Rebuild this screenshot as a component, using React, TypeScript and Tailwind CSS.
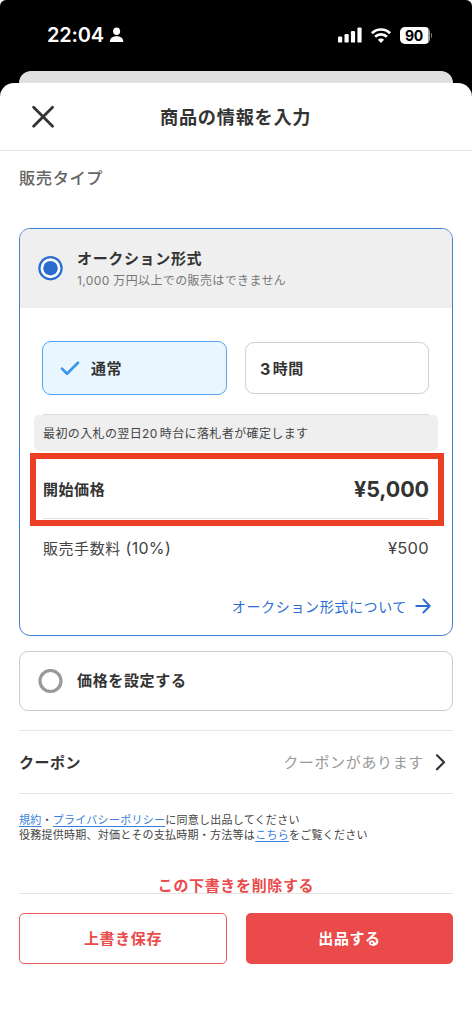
import type { ReactNode } from "react";

function StatusBar() {
  return (
    <div className="flex h-[71px] items-start justify-between pl-[47px] pr-[40px] text-white">
      <div className="flex h-[70px] items-center gap-[5px]">
        <span className="text-[20px] font-semibold leading-none tracking-[-0.2px]">22:04</span>
        <svg width="15" height="16" viewBox="0 0 15 16" fill="currentColor">
          <ellipse cx="7.6" cy="4.2" rx="3.5" ry="3.8" />
          <path d="M0.9 14.4C0.9 11.2 4 9.3 7.6 9.3s6.7 1.9 6.7 5.1c0 .3-.2.5-.5.5H1.4c-.3 0-.5-.2-.5-.5z" />
        </svg>
      </div>
      <div className="flex h-[70px] items-center">
        <svg width="24" height="16" viewBox="0 0 24 16" fill="currentColor">
          <rect x="0" y="9.5" width="4.2" height="6.1" rx="1.2" />
          <rect x="6.5" y="7" width="4.2" height="8.6" rx="1.2" />
          <rect x="12.9" y="4" width="4.2" height="11.6" rx="1.2" />
          <rect x="19.4" y="0.4" width="4.2" height="15.2" rx="1.2" />
        </svg>
        <svg className="ml-[9px]" width="20" height="15" viewBox="0 0 20 15" fill="none" stroke="currentColor" strokeWidth="2.6">
          <path d="M0.9 5.2a13 13 0 0 1 18.2 0" />
          <path d="M4.1 8.8a8.4 8.4 0 0 1 11.8 0" />
          <path d="M10 14.9L6.9 11.8a4.4 4.4 0 0 1 6.2 0z" fill="currentColor" stroke="none" />
        </svg>
        <div className="ml-[9px] flex h-[17px] w-[30px] items-center justify-center rounded-[5px] bg-[linear-gradient(to_right,#fff_92%,#999_92%)] pr-px pt-px text-[14px] font-bold leading-none tracking-[-0.2px] text-black">
          90
        </div>
        <div className="ml-px h-[5px] w-[1.5px] rounded-r-full bg-[#777]" />
      </div>
    </div>
  );
}

function Radio({ checked = false }: { checked?: boolean }) {
  return checked ? (
    <svg width="25" height="25" viewBox="0 0 25 25">
      <circle cx="12.5" cy="12.2" r="11.1" fill="#fff" stroke="#2b6dcf" strokeWidth="2.2" />
      <circle cx="12.5" cy="12.2" r="7.3" fill="#2b6dcf" />
    </svg>
  ) : (
    <svg width="25" height="25" viewBox="0 0 25 25">
      <circle cx="12.5" cy="12" r="10.5" fill="#fff" stroke="#999" strokeWidth="3.2" />
    </svg>
  );
}

function Link({ children }: { children: ReactNode }) {
  return <span className="text-[#3a7fd9] underline decoration-1 underline-offset-[2px]">{children}</span>;
}

export default function App() {
  return (
    <div className="h-[1024px] w-[472px] overflow-hidden bg-white font-['Inter','Noto_Sans_CJK_JP',sans-serif] text-[15px] text-[#333]">
      <div className="rounded-t-[6px] bg-black">
        <StatusBar />
        <div className="mx-[19px] h-[12px] rounded-t-[12px] bg-[#e0e0e0]" />
        <div className="flex h-[68px] items-center rounded-t-[14px] border-b border-[#e6e6e6] bg-white">
          <svg className="ml-[31px]" width="24" height="24" viewBox="0 0 24 24" fill="none" stroke="#333" strokeWidth="2.8" strokeLinecap="round">
            <path d="M2.6 2.3l19 19M21.6 2.3l-19 19" />
          </svg>
          <h1 className="ml-[105px] pt-[2px] text-[18.2px] font-bold leading-none tracking-[0.72px]">商品の情報を入力</h1>
        </div>
      </div>

      <div className="px-[19px]">
        <h2 className="flex h-[77px] items-start pt-[14px] text-[16.3px] font-medium leading-[26px] tracking-[0.55px] text-[#666]">
          販売タイプ
        </h2>

        <section className="h-[408px] overflow-hidden rounded-[11px] border border-[#4482d6]">
          <div className="flex h-[79px] items-center bg-[#efefef] pl-[18px]">
            <Radio checked />
            <div className="ml-[14px] pt-[2px]">
              <div className="text-[15px] font-bold leading-[22px] tracking-[0.65px]">オークション形式</div>
              <div className="text-[12px] leading-[22px] tracking-[0.37px] text-[#777]">1,000 万円以上での販売はできません</div>
            </div>
          </div>

          <div className="flex gap-[18px] pl-[22px] pt-[33px]">
            <div className="flex h-[54px] w-[185px] items-center rounded-[9px] border border-[#55a4ee] bg-[#e9f6ff] pl-[17px]">
              <svg width="20" height="16" viewBox="0 0 20 16" fill="none" stroke="#3b95ed" strokeWidth="2.7" strokeLinecap="round" strokeLinejoin="round">
                <path d="M2 8.6L7 13.7L18 2.8" />
              </svg>
              <span className="ml-[11px] pt-[2px] font-bold tracking-[0.5px]">通常</span>
            </div>
            <div className="mt-px flex h-[52px] w-[184px] items-center rounded-[9px] border border-[#d0d0d0] pl-[14px] pt-[2px] font-bold tracking-[0.5px]">
              <span className="mr-[2px] text-[16px]">3</span>時間
            </div>
          </div>

          <div className="mx-[23px] mt-[19px] h-px bg-[#ddd]" />
          <div className="mx-[14px] flex h-[36px] items-center rounded-[5px] bg-[#efefef] pl-[9px] pt-px text-[12px] tracking-[0.39px] text-[#444]">
            最初の入札の翌日20<span className="ml-[2px]">時台に落札者が確定します</span>
          </div>

          <div className="relative mt-[2px] flex h-[73px] items-center justify-between px-[23px]">
            <span className="pt-px font-bold tracking-[0.55px]">開始価格</span>
            <span className="text-[21.5px] font-bold tracking-[-0.1px]">¥5,000</span>
            <div className="absolute bottom-[7px] left-[23px] right-[23px] h-px bg-[#e0e0e0]" />
            <div className="absolute inset-y-0 left-[10px] right-[8px] border-[6px] border-[#ec4024]" />
          </div>

          <div className="flex h-[44px] items-center justify-between px-[23px] text-[#444]">
            <span className="tracking-[0.55px]">販売手数料 <span className="text-[16px] tracking-[0.3px]">(10%)</span></span>
            <span className="text-[16.5px] tracking-[0.3px]">¥500</span>
          </div>

          <div className="mt-[21px] flex h-[30px] items-center justify-end pr-[21px] text-[14px] tracking-[0.63px] text-[#2b6dcf]">
            オークション形式について
            <svg className="ml-[8px]" width="16" height="16" viewBox="0 0 16 16" fill="none" stroke="currentColor" strokeWidth="1.8" strokeLinecap="round" strokeLinejoin="round">
              <path d="M1.2 8H14.6M8.4 1.5L14.8 8L8.4 14.5" />
            </svg>
          </div>
        </section>

        <section className="mt-[15px] flex h-[60px] items-center rounded-[9px] border border-[#ccc] pl-[18px]">
          <Radio />
          <span className="ml-[14px] pt-px font-bold tracking-[0.65px]">価格を設定する</span>
        </section>

        <div className="mt-[19px] flex h-[64px] items-center justify-between border-y border-[#e6e6e6] pr-[7px]">
          <span className="pt-[2px] font-bold tracking-[0.5px]">クーポン</span>
          <span className="flex items-center pt-[2px] tracking-[0.65px] text-[#999]">
            クーポンがあります
            <svg className="ml-[11px]" width="11" height="18" viewBox="0 0 11 18" fill="none" stroke="#333" strokeWidth="2.2" strokeLinecap="round" strokeLinejoin="round">
              <path d="M2 1.3l7 7l-7 7" />
            </svg>
          </span>
        </div>

        <p className="mt-[19px] h-[61px] whitespace-nowrap text-[11px] leading-[14.5px] tracking-[0.26px] text-[#444]">
          <Link>規約</Link>・<Link>プライバシーポリシー</Link>に同意し出品してください
          <br />
          役務提供時期、対価とその支払時期・方法等は<Link>こちら</Link>をご覧ください
        </p>

        <div className="flex h-[20px] items-end justify-center border-b border-[#e4e4e4] font-bold leading-[14px] tracking-[0.65px] text-[#ea4a4a]">
          この下書きを削除する
        </div>
        <div className="mt-[19px] flex gap-[19px] font-bold tracking-[0.6px]">
          <button className="h-[51px] w-[208px] rounded-[5px] border border-[#ea5a5a] pt-px text-[#ea4a4a]">上書き保存</button>
          <button className="h-[51px] w-[207px] rounded-[5px] bg-[#eb4a4a] pt-px text-white">出品する</button>
        </div>
      </div>
    </div>
  );
}
